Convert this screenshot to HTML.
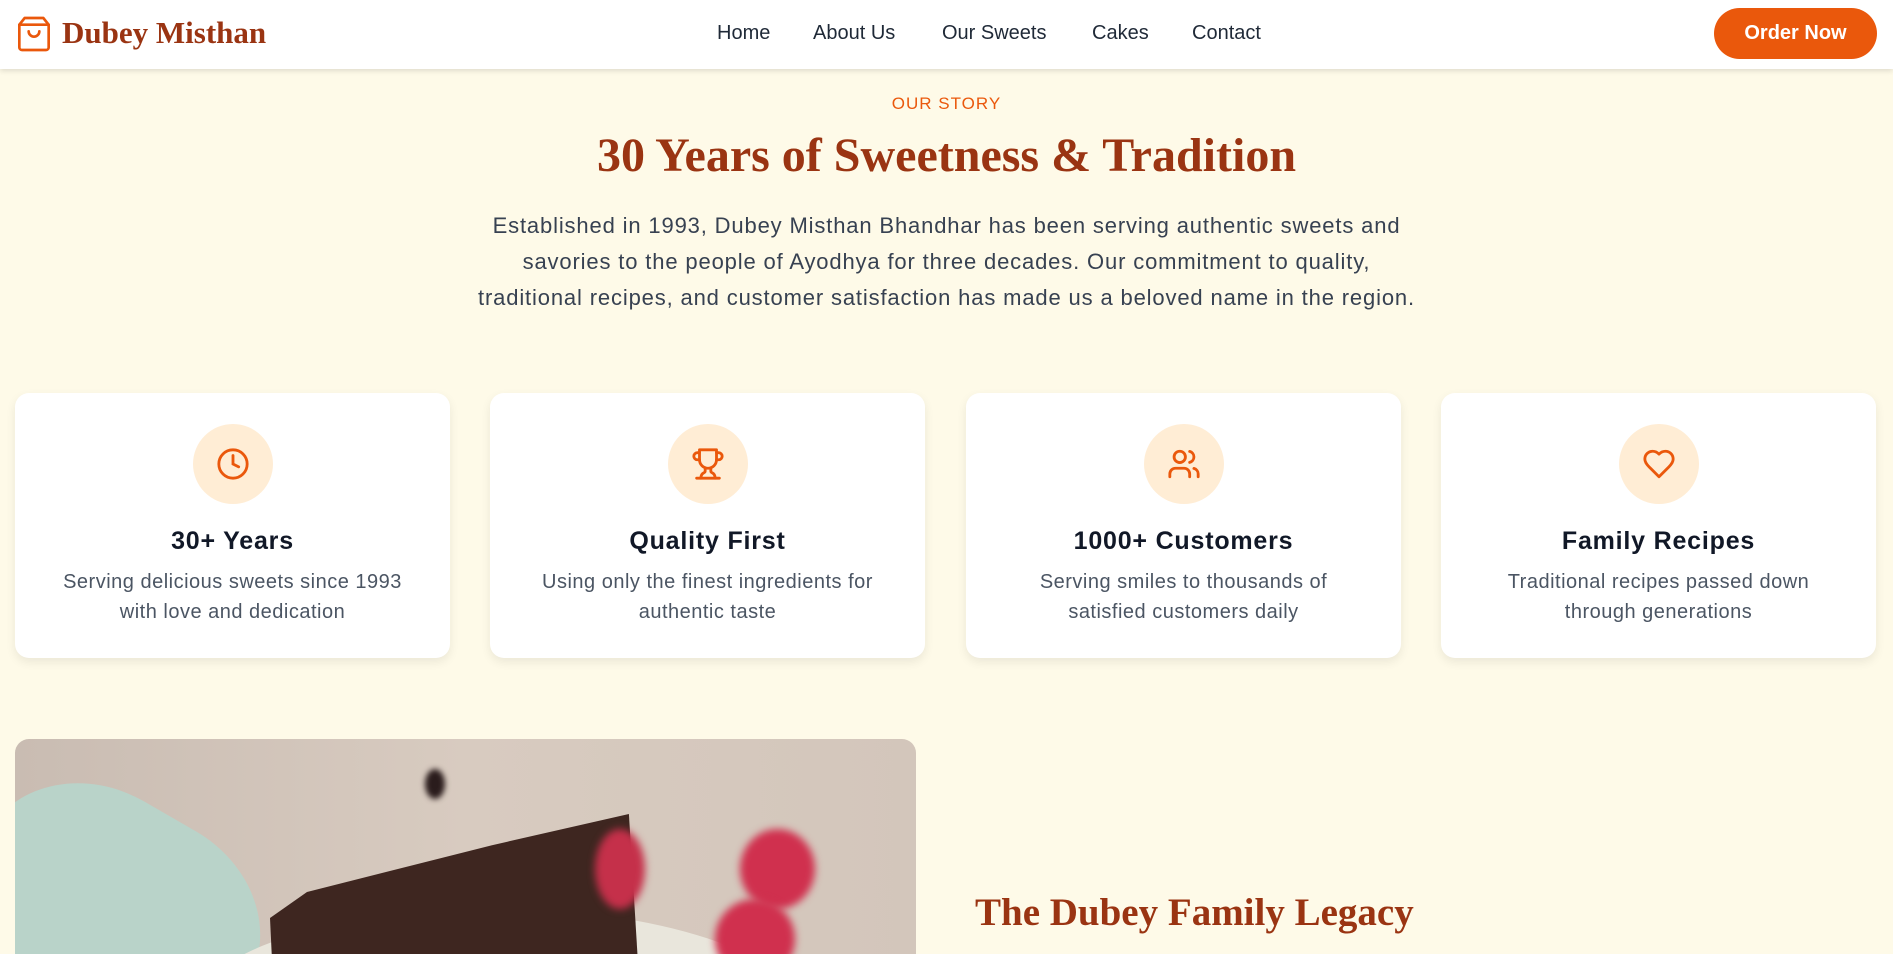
<!DOCTYPE html>
<html><head><meta charset="utf-8"><style>
*{box-sizing:border-box;margin:0;padding:0}
body{width:1893px;height:954px;overflow:hidden;background:#fefae8;font-family:"Liberation Sans",sans-serif;position:relative}
.nav{position:absolute;left:0;top:0;width:1893px;height:69px;background:#fff;box-shadow:0 2px 5px rgba(0,0,0,.12);z-index:2}
.logo{position:absolute;left:18px;top:16px}
.brand{position:absolute;left:62px;top:15px;font-family:"Liberation Serif",serif;font-weight:bold;font-size:31px;color:#9a3412}
.links a{position:absolute;top:22px;font-size:20px;color:#1f2937;text-decoration:none}
.btn{position:absolute;left:1714px;top:8px;width:163px;height:51px;border-radius:26px;background:#ea580c;color:#fff;font-weight:bold;font-size:20px;text-align:center;line-height:51px}
.c{position:absolute;left:0;width:1893px;text-align:center}
.card{position:absolute;top:393px;width:435px;height:265px;background:#fff;border-radius:14px;box-shadow:0 4px 10px rgba(0,0,0,.08);text-align:center}
.ic{width:80px;height:80px;border-radius:50%;background:#ffedd5;margin:31px auto 0;display:flex;align-items:center;justify-content:center}
.card h3{font-size:25px;color:#111827;margin-top:23px;letter-spacing:.8px}
.card p{font-size:20px;color:#4b5563;line-height:30px;margin-top:11px;letter-spacing:.5px}
</style></head><body>
<div class="nav">
<svg class="logo" width="32" height="36" viewBox="0 0 24 26" fill="none" stroke="#ea580c" stroke-width="2" stroke-linecap="round" stroke-linejoin="round"><path d="M5 1h14l4 5v17a2 2 0 0 1-2 2H3a2 2 0 0 1-2-2V6z"/><path d="M1 6h22"/><path d="M8 11a4 4 0 0 0 8 0"/></svg>
<div class="brand">Dubey Misthan</div>
<div class="links"><a style="left:717px">Home</a><a style="left:813px">About Us</a><a style="left:942px">Our Sweets</a><a style="left:1092px">Cakes</a><a style="left:1192px">Contact</a></div>
<div class="btn">Order Now</div>
</div>
<div class="c" style="top:94px;font-size:17px;color:#ea580c;letter-spacing:1px">OUR STORY</div>
<div class="c" style="top:128px;font-family:'Liberation Serif',serif;font-weight:bold;font-size:48px;color:#9a3412">30 Years of Sweetness &amp; Tradition</div>
<div class="c" style="top:208px;font-size:22px;line-height:36px;color:#374151;letter-spacing:.85px">Established in 1993, Dubey Misthan Bhandhar has been serving authentic sweets and<br>savories to the people of Ayodhya for three decades. Our commitment to quality,<br>traditional recipes, and customer satisfaction has made us a beloved name in the region.</div>

<div class="card" style="left:15px"><div class="ic"><svg width="34" height="34" viewBox="0 0 24 24" fill="none" stroke="#ea580c" stroke-width="2" stroke-linecap="round"><circle cx="12" cy="12" r="10"/><path d="M12 6v6l4 2"/></svg></div><h3>30+ Years</h3><p>Serving delicious sweets since 1993<br>with love and dedication</p></div>
<div class="card" style="left:490px"><div class="ic"><svg width="34" height="34" viewBox="0 0 24 24" fill="none" stroke="#ea580c" stroke-width="2" stroke-linecap="round" stroke-linejoin="round"><path d="M6 9H4.5a2.5 2.5 0 0 1 0-5H6"/><path d="M18 9h1.5a2.5 2.5 0 0 0 0-5H18"/><path d="M4 22h16"/><path d="M10 14.66V17c0 .55-.47.98-.97 1.21C7.850 18.75 7 20.240 7 22"/><path d="M14 14.66V17c0 .55.47.98.97 1.21C16.15 18.75 17 20.24 17 22"/><path d="M18 2H6v7a6 6 0 0 0 12 0V2Z"/></svg></div><h3>Quality First</h3><p>Using only the finest ingredients for<br>authentic taste</p></div>
<div class="card" style="left:966px"><div class="ic"><svg width="34" height="34" viewBox="0 0 24 24" fill="none" stroke="#ea580c" stroke-width="2" stroke-linecap="round" stroke-linejoin="round"><path d="M16 21v-2a4 4 0 0 0-4-4H6a4 4 0 0 0-4 4v2"/><circle cx="9" cy="7" r="4"/><path d="M22 21v-2a4 4 0 0 0-3-3.87"/><path d="M16 3.13a4 4 0 0 1 0 7.75"/></svg></div><h3>1000+ Customers</h3><p>Serving smiles to thousands of<br>satisfied customers daily</p></div>
<div class="card" style="left:1441px"><div class="ic"><svg width="34" height="34" viewBox="0 0 24 24" fill="none" stroke="#ea580c" stroke-width="2" stroke-linecap="round" stroke-linejoin="round"><path d="M19 14c1.49-1.46 3-3.21 3-5.5A5.5 5.5 0 0 0 16.5 3c-1.760 0-3 .5-4.5 2-1.5-1.5-2.740-2-4.5-2A5.5 5.5 0 0 0 2 8.5c0 2.3 1.5 4.05 3 5.5l7 7Z"/></svg></div><h3>Family Recipes</h3><p>Traditional recipes passed down<br>through generations</p></div>

<div style="position:absolute;left:15px;top:739px;width:901px;height:215px;border-radius:14px 14px 0 0;overflow:hidden;background:linear-gradient(90deg,#c9bcb2,#d8cbc0 50%,#d3c6bb)">
<div style="position:absolute;left:-60px;top:60px;width:300px;height:260px;background:#b9d3c9;border-radius:40%;transform:rotate(30deg)"></div>
<div style="position:absolute;left:180px;top:170px;width:600px;height:200px;background:#e9e6dc;border-radius:50%"></div>
<div style="position:absolute;left:255px;top:75px;width:370px;height:260px;background:#3e2620;clip-path:polygon(10% 30%,60% 12%,97% 0,100% 70%,95% 100%,2% 100%,0 40%)"></div>
<div style="position:absolute;left:580px;top:90px;width:50px;height:80px;background:#c5304a;border-radius:50%;filter:blur(4px)"></div>
<div style="position:absolute;left:725px;top:90px;width:75px;height:80px;background:#d0304e;border-radius:50%;filter:blur(4px)"></div>
<div style="position:absolute;left:700px;top:160px;width:80px;height:80px;background:#d0304e;border-radius:50%;filter:blur(4px)"></div>
<div style="position:absolute;left:410px;top:30px;width:20px;height:30px;background:#2a1c1c;border-radius:50%;filter:blur(3px)"></div>
</div>
<div style="position:absolute;left:975px;top:890px;font-family:'Liberation Serif',serif;font-weight:bold;font-size:39px;color:#9a3412">The Dubey Family Legacy</div>
</body></html>
